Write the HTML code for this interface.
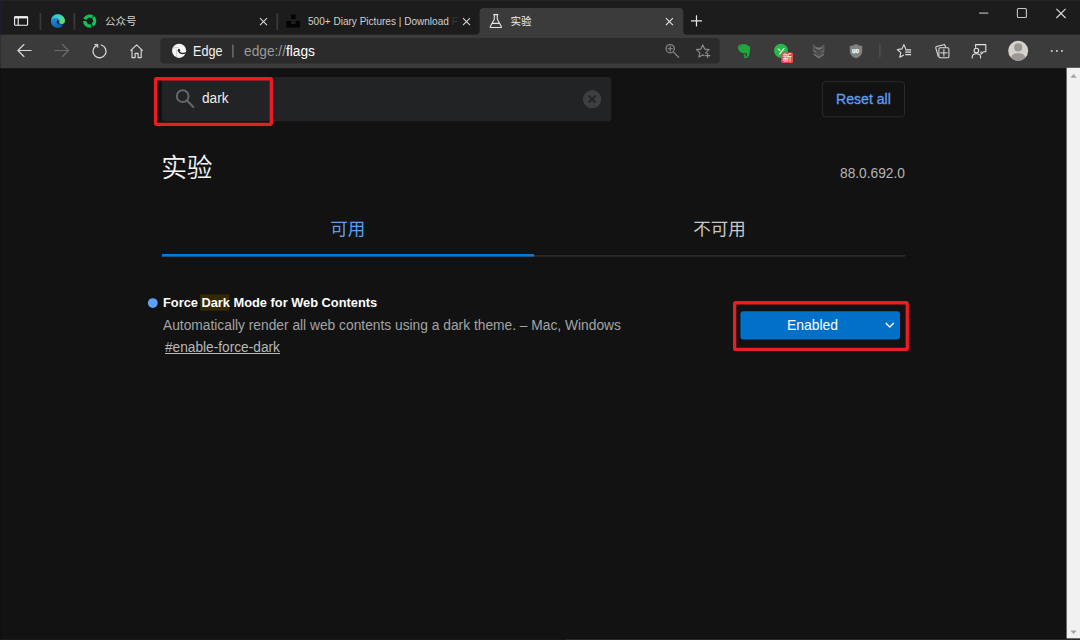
<!DOCTYPE html>
<html lang="zh-CN">
<head>
<meta charset="utf-8">
<title>实验</title>
<style>
*{box-sizing:border-box;margin:0;padding:0}
html,body{width:1080px;height:640px;overflow:hidden;background:#121212}
body{position:relative;font-family:"Liberation Sans","Noto Sans CJK SC",sans-serif;color:#fff}
.t{position:absolute;white-space:nowrap;line-height:1;transform-origin:0 0}
svg{position:absolute;left:0;top:0;overflow:visible}
</style>
</head>
<body>
<!-- ===== background shapes ===== -->
<svg id="bg" width="1080" height="640" viewBox="0 0 1080 640">
<!-- chrome -->
<rect x="0" y="30" width="1080" height="38.2" fill="#3b3b3b"/>
<rect x="0" y="0" width="1080" height="34.6" fill="#1c1c1c"/>
<rect x="0" y="0" width="1080" height="1" fill="#232323"/>
<path d="M475.5 35Q479.6 35 479.6 31V12Q479.6 8 483.6 8H679.3Q683.3 8 683.3 12V31Q683.3 35 687.4 35Z" fill="#3b3b3b"/>
<rect x="160.3" y="38" width="559.4" height="25.4" rx="4" fill="#2b2b2b"/>
<g fill="#3a3a3a"><rect x="39.6" y="13" width="1.7" height="17"/><rect x="73.5" y="13" width="1.7" height="17"/><rect x="276.4" y="13" width="1.7" height="17"/></g>
<rect x="232.3" y="44.6" width="1.2" height="13" fill="#7c7c7c"/>
<rect x="0" y="0" width="1" height="34.6" fill="#1b1f27"/>
<rect x="0" y="34.6" width="1" height="33.6" fill="#2e3036"/>
<rect x="0" y="68.2" width="1" height="571.8" fill="#0e0f11"/>
<!-- page -->
<rect x="162" y="77" width="449.2" height="44.2" rx="3" fill="#222325"/>
<rect x="155.55" y="78.75" width="115.8" height="45.6" rx="1" fill="none" stroke="#ec1c24" stroke-width="3.3"/>
<rect x="822.4" y="81.7" width="82.1" height="35.1" rx="3" fill="none" stroke="#2b2b2b" stroke-width="1"/>
<rect x="162" y="255" width="743" height="1.7" fill="#2d2d2d"/>
<rect x="162" y="254" width="372" height="2.6" fill="#0478d2"/>
<circle cx="152.8" cy="303.05" r="4.9" fill="#5ea1f6"/>
<rect x="200.2" y="294.4" width="28.8" height="16.3" fill="#332800"/>
<rect x="740.4" y="311.3" width="159.6" height="28.1" rx="3" fill="#0070c9"/>
<rect x="734.65" y="302.75" width="172.6" height="46.7" rx="1" fill="none" stroke="#ec1c24" stroke-width="3.3"/>
<!-- scrollbar -->
<rect x="1066.6" y="67.8" width="13.4" height="570.6" fill="#f1f1f1"/>
<rect x="0" y="639" width="566" height="1" fill="#1a1a1a"/><rect x="566" y="639" width="514" height="1" fill="#2b2b2b"/>
</svg>

<!-- ===== text ===== -->
<div class="t" id="t1" style="left:105px;top:15.5px;font-size:10.5px;color:#d2d2d2">公众号</div>
<div class="t" id="t2" style="left:308px;top:15.9px;font-size:10.5px;color:#d0d0d0;transform:scaleX(.957)">500+ Diary Pictures | Download<span style="color:#383838"> F</span></div>
<div class="t" id="t3" style="left:510.5px;top:15.7px;font-size:10.5px;color:#f0f0f0">实验</div>
<div class="t" id="t4" style="left:193px;top:44.3px;font-size:14px;color:#f2f2f2;transform:scaleX(.9)">Edge</div>
<div class="t" id="t5" style="left:244.2px;top:44.3px;font-size:14px;color:#9a9a9a;transform:scaleX(.98)">edge://<span style="color:#fff">flags</span></div>
<div class="t" id="t6" style="left:202.4px;top:91.2px;font-size:14px;color:#f0f0f0;transform:scaleX(.975)">dark</div>
<div class="t" id="t7" style="left:836.4px;top:92.4px;font-size:14.6px;color:#5e9ff5;transform:scaleX(.965);-webkit-text-stroke:.3px #5e9ff5">Reset all</div>
<div class="t" id="t8" style="left:161.2px;top:155.6px;font-size:25.7px;color:#f5f5f5;font-weight:350">实验</div>
<div class="t" id="t9" style="left:839.8px;top:166.15px;font-size:14px;color:#b4b4b4;transform:scaleX(.981)">88.0.692.0</div>
<div class="t" id="t10" style="left:330.3px;top:221px;font-size:17.5px;color:#5e9ff5">可用</div>
<div class="t" id="t11" style="left:693.2px;top:221.3px;font-size:17.5px;color:#c8c8c8">不可用</div>
<div class="t" id="t12" style="left:162.6px;top:295.9px;font-size:13.6px;color:#fff;transform:scaleX(.943);font-weight:bold">Force Dark Mode for Web Contents</div>
<div class="t" id="t13" style="left:163px;top:317.75px;font-size:14px;color:#a4a4a4;transform:scaleX(.984)">Automatically render all web contents using a dark theme. – Mac, Windows</div>
<div class="t" id="t14" style="left:164.8px;top:340.3px;font-size:14px;color:#b8b8b8;text-decoration:underline;transform:scaleX(.978)">#enable-force-dark</div>
<div class="t" id="t15" style="left:787.3px;top:318.2px;font-size:14.3px;color:#fff;transform:scaleX(.974)">Enabled</div>
<div class="t" id="tb1" style="left:782.4px;top:53.3px;font-size:9.4px;color:#fff;z-index:3">新</div>
<div class="t" id="tb2" style="left:852.1px;top:46.9px;font-size:8px;font-weight:bold;color:#fff;z-index:3;transform:scaleX(.74);-webkit-text-stroke:.25px #fff">uo</div>

<!-- ===== icons ===== -->
<svg id="icons" width="1080" height="640" viewBox="0 0 1080 640" fill="none" stroke-linecap="round" stroke-linejoin="round">
<defs>
<linearGradient id="eg1" x1=".2" y1="0" x2=".6" y2="1"><stop offset="0" stop-color="#2a9fe8"/><stop offset="1" stop-color="#0f5cb0"/></linearGradient>
<linearGradient id="eg2" x1="0" y1="0" x2="1" y2=".4"><stop offset="0" stop-color="#2ab8e6"/><stop offset=".55" stop-color="#3fcfc0"/><stop offset="1" stop-color="#66de63"/></linearGradient>
</defs>
<!-- vertical tabs button -->
<g stroke="#f2f2f2" stroke-width="1.1">
<rect x="14.6" y="16.7" width="13" height="8.5" rx=".8"/>
<path d="M14.3 17.4H27.9" stroke-width="2" stroke-linecap="butt"/>
<path d="M18.2 18V25"/>
</g>
<!-- edge logo (colour) -->
<g stroke="none">
<circle cx="57.9" cy="21" r="7" fill="url(#eg1)"/>
<path d="M51.2 19.4A7 7 0 0 1 64.9 21c0 1.8-1.5 2.9-3.1 2.9c-1.4 0-2.3-.8-2.3-1.6c0-.5 .2-.8 .2-1.4c0-1.5-1.5-2.9-3.6-2.9c-2 0-3.9 .6-4.9 1.4z" fill="url(#eg2)"/>
<path d="M57.4 19.9c.9 .2 1.6 .9 1.6 1.8c0 .5-.2 .9-.2 1.4c0 .7 .7 1.3 1.8 1.5c-1 .2-2.2-.2-3-1c-.9-.9-1.2-2.5-.2-3.7z" fill="#151c26"/>
<path d="M60.6 24.6c1.5 .2 3-.3 4-1.3l1.4 2.2l-2 2.6l-1.7 .3c1-.7 1.6-1.5 1.9-2.3c-1.1 .4-2.5 .1-3.6-1.5z" fill="#1c1c1c"/>
</g>
<!-- green wechat-mp icon -->
<circle cx="89.7" cy="21" r="4.95" stroke="#10c25c" stroke-width="3.3" stroke-linecap="butt" stroke-dasharray="8.87 1.5" transform="rotate(-48 89.7 21)"/>
<!-- tab close buttons / plus -->
<g stroke="#d6d6d6" stroke-width="1.1" stroke-linecap="butt">
<path d="M260 18.1l7 7M267 18.1l-7 7"/>
<path d="M463 18.1l7 7M470 18.1l-7 7"/>
<path d="M665.9 18.1l7 7M672.9 18.1l-7 7" stroke="#e6e6e6"/>
<path d="M691 20.8h11M696.5 15.2v11.3" stroke="#e6e6e6" stroke-width="1.2"/>
</g>
<!-- tab 2 favicon (black) -->
<path d="M291 14.6h4.7v4.3H291zM286.3 21h4.7v3h4.7v-3h4.3v6.4h-13.7z" fill="#030303" stroke="none"/>
<!-- flask -->
<g stroke="#e4e4e4" stroke-width="1.1">
<path d="M493.7 14.6h4.2M494.3 14.6v4.6l-4 7.2q-.5 1.1 .7 1.1h9.6q1.2 0 .7-1.1l-4-7.2v-4.6"/>
<path d="M492.3 23.4h7"/>
</g>
<!-- window controls -->
<g stroke-linecap="butt">
<path d="M979.1 13.1h9.2" stroke="#b4b4b4" stroke-width="1.2"/>
<rect x="1017.4" y="8.5" width="9" height="9" rx="1" stroke="#c4c4c4" stroke-width="1.1"/>
<path d="M1056.4 8.8l9.2 9.2M1065.6 8.8l-9.2 9.2" stroke="#dcdcdc" stroke-width="1.1"/>
</g>
<!-- nav buttons -->
<g stroke="#d8d8d8" stroke-width="1.15">
<path d="M31.2 50.5H18M23.9 44.5L17.9 50.5l6 6"/>
<path d="M55 50.5h13.3M62.5 44.5l6 6l-6 6" stroke="#6c6c6c"/>
<path d="M101.3 45A6.5 6.5 0 1 1 95.4 46.2" stroke-width="1.3"/>
<path d="M95.1 44.4h2.7v2.7z" fill="#d8d8d8" stroke-width=".9"/>
<path d="M130.8 50.4l5.8-5.6l5.8 5.6M132 49.6v8h3.1v-4.2h3v4.2h3.1v-8" stroke-width="1.15"/>
</g>
<!-- edge logo (white, omnibox) -->
<g stroke="none">
<circle cx="179.1" cy="50.8" r="7.1" fill="#f6f6f6"/>
<ellipse cx="179" cy="50.3" rx="1.2" ry="1.5" fill="#2b2b2b"/>
<path d="M178.7 50.3c.1 1.9 1.5 3.1 3.4 3.2c1.3 .1 2.4-.1 3.5-.6" stroke="#2b2b2b" stroke-width="1.4" fill="none"/>
<path d="M172.8 48.2c1.7-.7 3.6-.8 5.4-.5" stroke="#b4b4b4" stroke-width=".7" fill="none"/>
<path d="M176.7 50.2c-.6 2.3-.5 4.6 .4 6.8" stroke="#bcbcbc" stroke-width=".8" fill="none"/>
<path d="M184.6 54.6l2.4 2.4l-1 1.8" fill="#2b2b2b"/>
</g>
<!-- zoom icon -->
<g stroke="#858585" stroke-width="1.25">
<circle cx="670.2" cy="48.7" r="4.15"/>
<path d="M673.3 51.9l5.3 5.4" stroke-width="1.3"/>
<path d="M668 48.7h4.4M670.2 46.5v4.4" stroke-width="1.1" stroke="#8c8c8c"/>
</g>
<!-- add favourite star -->
<g stroke="#909090" stroke-width="1.1">
<path d="M702.8 44.9l1.9 4.2l4.4 .5l-3.3 3l.2 .9M702.8 44.9l-1.9 4.2l-4.4 .5l3.3 3l-.9 4.5l3.9-2.2l1.2 .7"/>
<path d="M705.5 55.6h4.4M707.7 53.4v4.4"/>
</g>
<!-- evernote -->
<g stroke="none" fill="#1ea73d">
<path d="M740.5 44.3h4.6c1.3 0 2 .5 2.3 1.4l1.7 .4c.7 .2 1 .8 1 1.7c0 3.1-.3 5.4-.9 7.3c-.5 1.7-1.5 2.9-3.2 2.9c-1.5 0-2.4-.9-2.4-2.1c0-1.1 .7-1.9 1.8-1.9l.2 1.2c-.4 0-.7 .3-.7 .7c0 .5 .4 .8 1 .8c.7 0 1.1-.6 1.1-1.9l-.1-1.6c-2.3 .3-5.4 0-6.7-1.2c-1.5-1.4-2.4-3.5-2.4-5.4l2.7-.1z"/>
<path d="M737.9 46.3l2.2-2.2v2.2z"/>
</g>
<!-- green Y extension + badge -->
<g stroke="none">
<circle cx="781" cy="50.8" r="7" fill="#2ab74a"/>
<path d="M777.3 48.2q3 .3 3.8 3.2q-2.9-.5-3.8-3.2z" fill="#f2fff2"/>
<path d="M784 48.6l-4.3 5.4" stroke="#f2fff2" stroke-width="1.2" fill="none"/>
<rect x="781.2" y="52.6" width="11.8" height="10.5" rx="1.5" fill="#e84a4c"/>
</g>
<!-- fox (grey) -->
<g stroke="#606060" stroke-width="1" fill="#4c4c4c">
<path d="M813.7 45l3.1 2.7h4l3.1-2.7v6.9l-5.1 3.6l-5.1-3.6z"/>
<path d="M815.7 47.8l3.1 1.2l3.1-1.2" fill="none" stroke="#858585" stroke-width="1.1"/>
<path d="M814.2 51l1.7 .7M823.4 51l-1.7 .7" fill="none" stroke="#7a7a7a" stroke-width=".9"/>
<path d="M814 54.3l4.8 3.3l4.8-3.3" fill="none" stroke="#7c7c7c" stroke-width="1.3"/>
</g>
<!-- uBlock shield -->
<g stroke="none">
<path d="M856 44c2.2 1.3 4.2 1.8 6.2 1.9v5.3c0 3.4-2.6 5.9-6.2 7.1c-3.6-1.2-6.2-3.7-6.2-7.1v-5.3c2-.1 4-.6 6.2-1.9z" fill="#828282"/>
</g>
<path d="M879.9 44.3v13.2" stroke="#555" stroke-width="1.1" stroke-linecap="butt"/>
<!-- favourites -->
<g stroke="#e2e2e2" stroke-width="1.1">
<path d="M905.6 48.6l-1.7-4l-1.9 4.3l-4.7 .6l3.5 3.2l-1 4.5l3.6-2"/>
<path d="M905.2 49.8h5.9M905.2 52.2h5.9M905.2 54.7h5.9" stroke-linecap="butt" stroke-width="1.2"/>
</g>
<!-- collections -->
<g stroke="#dedede" stroke-width="1.05">
<path d="M938.2 56.4l-2.4-8.4q-.3-1.1 .8-1.4l7-1.9q1.1-.3 1.4 .8l.4 1.4"/>
<rect x="938.9" y="47.8" width="10" height="10" rx="1.2"/>
<path d="M940.6 52.9h6.6M943.9 49.5v6.6" stroke-width="1"/>
</g>
<!-- feedback -->
<g stroke="#e2e2e2" stroke-width="1.1">
<path d="M975.6 47.2v-2.6h10.2v7.2h-2.3l-2.4 2.3v-2.3"/>
<circle cx="976.4" cy="50.6" r="2.3"/>
<path d="M972.2 58v-.9q0-3.4 4.2-3.4q4.2 0 4.2 3.4v.9"/>
</g>
<!-- avatar -->
<g stroke="none">
<circle cx="1018.2" cy="50.8" r="10" fill="#d6d3cf"/>
<circle cx="1018.2" cy="47.4" r="4.1" fill="#9c9893"/>
<path d="M1011.3 57.4c0-2.8 2.8-4.2 6.9-4.2s6.9 1.4 6.9 4.2c-1.8 2.1-4.3 3.4-6.9 3.4s-5.1-1.3-6.9-3.4z" fill="#9c9893"/>
</g>
<g fill="#d4d4d4" stroke="none">
<rect x="1050.9" y="50.1" width="1.7" height="1.7"/><rect x="1056" y="50.1" width="1.7" height="1.7"/><rect x="1061.1" y="50.1" width="1.7" height="1.7"/>
</g>
<!-- page: search icon -->
<g stroke="#64666a" stroke-width="2">
<circle cx="182.7" cy="96.2" r="5.9"/>
<path d="M187 100.6l6.3 6.3" stroke-width="2.1"/>
</g>
<!-- clear button -->
<circle cx="592.1" cy="99.2" r="9.1" fill="#3e3f42" stroke="none"/>
<path d="M588.6 95.7l7 7M595.6 95.7l-7 7" stroke="#222325" stroke-width="1.7" stroke-linecap="butt"/>
<!-- select chevron -->
<path d="M885.8 322.9l4 4l4-4" stroke="#fff" stroke-width="1.4" stroke-linecap="butt"/>
<!-- scrollbar arrows -->
<path d="M1070.4 77.7l3.2-3.6l3.2 3.6z" fill="#a3a3a3" stroke="none"/>
<path d="M1070.4 630.4l3.2 3.6l3.2-3.6z" fill="#a3a3a3" stroke="none"/>

</svg>
</body>
</html>
